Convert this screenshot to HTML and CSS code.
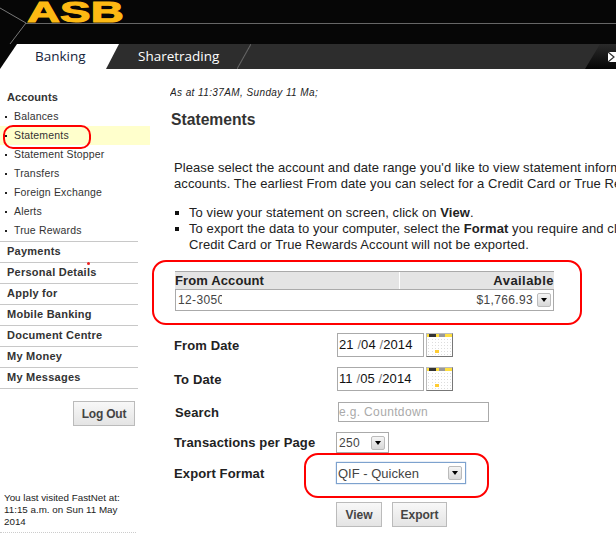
FILE: index.html
```html
<!DOCTYPE html>
<html lang="en">
<head>
<meta charset="utf-8">
<title>ASB FastNet Statements</title>
<link rel="stylesheet" href="styles.css">
</head>
<body>
<div class="page">
  <header class="masthead">
    <svg class="lines" width="616" height="44" viewBox="0 0 616 44" aria-hidden="true">
      <path d="M0 8 26 23 10 44" fill="none" stroke="#777" stroke-width="1"/>
      <path d="M26 23.500H616" fill="none" stroke="#666" stroke-width="1"/>
    </svg>
    <div class="logo"><span class="logo-text">ASB</span></div>
  </header>
  <nav class="tabs">
    <div class="tab tab-active">Banking</div>
    <div class="tab tab-other">Sharetrading</div>
    <div class="tab-spacer"></div>
    <div class="tab-mail">
      <svg width="12" height="12" viewBox="0 0 12 12" aria-hidden="true"><rect x="1" y="1" width="11" height="10" fill="#fff"/><path d="M1 1 7 6 1 11" fill="none" stroke="#333" stroke-width="1.200"/></svg>
    </div>
  </nav>
  <div class="body">
    <aside class="sidebar">
      <div class="nav-head">Accounts</div>
      <ul class="subnav">
        <li>Balances</li>
        <li class="current">Statements</li>
        <li>Statement Stopper</li>
        <li>Transfers</li>
        <li>Foreign Exchange</li>
        <li>Alerts</li>
        <li>True Rewards</li>
      </ul>
      <ul class="mainnav">
        <li>Payments</li>
        <li>Personal Details</li>
        <li>Apply for</li>
        <li>Mobile Banking</li>
        <li>Document Centre</li>
        <li>My Money</li>
        <li>My Messages</li>
      </ul>
      <div class="logout-row"><button class="btn btn-logout" type="button">Log Out</button></div>
      <p class="visited">You last visited FastNet at: 11:15 a.m. on Sun 11 May 2014</p>
    </aside>
    <main class="content">
      <p class="timestamp">As at 11:37AM, Sunday 11 Ma;</p>
      <h1 class="title">Statements</h1>
      <div class="copy">
        <p class="intro">Please select the account and date range you'd like to view statement information for your<br>accounts. The earliest From date you can select for a Credit Card or True Rewards Account</p>
        <ul class="bullets">
          <li>To view your statement on screen, click on <b>View</b>.</li>
          <li>To export the data to your computer, select the <b>Format</b> you require and click Export. Transactions on a<br>Credit Card or True Rewards Account will not be exported.</li>
        </ul>
      </div>
      <div class="acct">
        <div class="acct-head"><span class="acct-h1">From Account</span><span class="acct-h2">Available</span></div>
        <div class="acct-row">
          <span class="acct-no">12-3050</span>
          <span class="acct-bal">$1,766.93</span>
          <span class="arrow"></span>
        </div>
      </div>
      <div class="form">
        <div class="frow frow-from">
          <label class="flabel">From Date</label>
          <div class="date">21 <i>/</i>04 <i>/</i>2014</div>
          <div class="cal"><span class="cal-top"></span><span class="cal-dot"></span></div>
        </div>
        <div class="frow frow-to">
          <label class="flabel">To Date</label>
          <div class="date">11 <i>/</i>05 <i>/</i>2014</div>
          <div class="cal"><span class="cal-top"></span><span class="cal-dot"></span></div>
        </div>
        <div class="frow frow-search">
          <label class="flabel">Search</label>
          <div class="search">e.g. Countdown</div>
        </div>
        <div class="frow frow-tx">
          <label class="flabel">Transactions per Page</label>
          <div class="select select-tx"><span>250</span><span class="arrow"></span></div>
        </div>
        <div class="frow frow-exp">
          <label class="flabel">Export Format</label>
          <div class="select select-exp"><span>QIF - Quicken</span><span class="arrow"></span></div>
        </div>
        <div class="actions">
          <button class="btn btn-view" type="button">View</button>
          <button class="btn btn-export" type="button">Export</button>
        </div>
      </div>
    </main>
  </div>
  <div class="ring ring-nav"></div>
  <div class="ring ring-acct"></div>
  <div class="ring ring-exp"></div>
  <div class="red-dot"></div>
</div>
</body>
</html>
```

FILE: styles.css
```css
* { box-sizing: border-box; }
html, body { margin: 0; padding: 0; background: #fff; }
.page {
  position: relative;
  width: 616px;
  height: 540px;
  overflow: hidden;
  font-family: "Liberation Sans", Arial, sans-serif;
  color: #111;
}
ul { list-style: none; margin: 0; padding: 0; }
p { margin: 0; }

.masthead {
  position: relative;
  height: 44px;
  background: #060606;
  overflow: hidden;
}
.lines { position: absolute; left: 0; top: 0; }
.logo { padding-left: 27px; height: 24px; position: relative; }
.logo-text {
  display: inline-block;
  color: #fdb913;
  font: bold 29px/25px "Liberation Sans", Arial, sans-serif;
  -webkit-text-stroke: 1px #fdb913;
  transform: scaleX(1.58);
  transform-origin: 0 0;
}

.tabs {
  display: flex;
  height: 25px;
  background: linear-gradient(to right, #060606 18px, #2d2d2d 18px);
}
.tab { height: 25px; line-height: 25px; font-family: "Open Sans", sans-serif; font-size: 13.500px; }
.tab-active {
  width: 119px;
  padding-left: 35px;
  background: #fff;
  color: #16243c;
  clip-path: polygon(0 100%, 17px 0, 100% 0, 106px 100%);
}
.tab-other {
  width: 132px;
  padding-left: 19px;
  color: #fff;
  background:
    linear-gradient(to bottom right, transparent calc(50% - 1px), #666 50%, transparent calc(50% + 1px)) right / 14px 25px no-repeat;
}
.tab-spacer { flex: 1; }
.tab-mail {
  width: 31px;
  padding: 7px 0 0 22px;
  margin-left: -1px;
  background: linear-gradient(#2a2a2a, #050505);
  clip-path: polygon(0 100%, 15px 0, 100% 0, 100% 100%);
  overflow: hidden;
}
.tab-mail svg { display: block; }

.body { display: flex; }
.sidebar { width: 170px; flex: none; padding-top: 20px; }
.nav-head {
  height: 16px;
  padding-left: 7px;
  font-size: 11px;
  line-height: 16px;
  font-weight: bold;
  color: #333;
  letter-spacing: .1px;
}
.subnav { padding-top: 2px; }
.subnav li {
  position: relative;
  width: 150px;
  height: 19px;
  padding-left: 14px;
  font-size: 10.500px;
  line-height: 19px;
  color: #333;
  letter-spacing: .17px;
}
.subnav li::before {
  content: "";
  position: absolute;
  left: 5px;
  top: 9px;
  width: 2px;
  height: 2px;
  background: #222;
}
.subnav .current { background: #ffffcc; }
.mainnav { width: 138px; border-top: 1px solid #c8c8c8; margin-top: 1px; }
.mainnav li {
  height: 21px;
  padding-left: 7px;
  border-bottom: 1px solid #c8c8c8;
  font-size: 11px;
  line-height: 18px;
  font-weight: bold;
  color: #333;
  letter-spacing: .25px;
}
.logout-row { padding: 12px 0 0 73px; }
.btn {
  display: block;
  margin: 0;
  padding: 0;
  border: 1px solid #bbb;
  background: linear-gradient(#f8f8f8, #e4e4e4);
  color: #444;
  font: bold 12px "Liberation Sans", Arial, sans-serif;
  text-align: center;
}
.btn-logout { width: 62px; height: 25px; letter-spacing: -.2px; }
.visited {
  width: 136px;
  margin: 66px 0 0;
  padding: 0 6px 4px 4px;
  border-bottom: 1px dotted #ccc;
  font-size: 9.800px;
  line-height: 12px;
  color: #222;
}

.content { width: 446px; flex: none; overflow: hidden; }
.timestamp {
  margin-top: 18px;
  font-size: 10px;
  line-height: 12px;
  font-style: italic;
  white-space: nowrap;
  color: #222;
  letter-spacing: .4px;
}
.title {
  margin: 11px 0 0 1px;
  font-size: 15.700px;
  line-height: 20px;
  font-weight: bold;
  color: #333;
}
.copy { margin: 0 0 0 4px; width: 620px; font-size: 13px; line-height: 16px; color: #222; letter-spacing: .08px; }
.intro { margin-top: 30px; white-space: nowrap; }
.bullets { margin-top: 13px; }
.bullets li { position: relative; padding-left: 15px; white-space: nowrap; }
.bullets li::before {
  content: "";
  position: absolute;
  left: 1px;
  top: 6px;
  width: 4px;
  height: 4px;
  background: #111;
}

.acct { width: 379px; margin: 18px 0 0 5px; }
.acct-head {
  display: flex;
  justify-content: space-between;
  height: 18px;
  background: linear-gradient(to right, transparent 224px, #fff 224px, #fff 225px, transparent 225px) #e4e4e4;
  border-top: 1px solid #aaa;
  font-size: 13px;
  line-height: 17px;
  font-weight: bold;
  color: #222;
  letter-spacing: .12px;
}
.acct-h2 { letter-spacing: .45px; }
.acct-row {
  display: flex;
  align-items: center;
  height: 22px;
  border: 1px solid #aaa;
  padding: 0 2px 0 2px;
  font-size: 12px;
  color: #444;
  letter-spacing: .35px;
}
.acct-no { width: 44px; overflow: hidden; white-space: nowrap; }
.acct-bal { margin-left: auto; margin-right: 4px; }

.arrow {
  position: relative;
  flex: none;
  display: block;
  width: 14px;
  height: 14px;
  border: 1px solid #bbb;
  border-radius: 2px;
  background: linear-gradient(#f5f5f5, #d8d8d8);
}
.arrow::after {
  content: "";
  position: absolute;
  left: 3px;
  top: 4px;
  border: 3px solid transparent;
  border-top: 4px solid #000;
  border-bottom: 0;
}

.form { margin: 22px 0 0 4px; }
.frow { display: flex; align-items: center; }
.flabel {
  flex: none;
  width: 163px;
  font-size: 13px;
  font-weight: bold;
  color: #222;
  letter-spacing: .12px;
}
.frow-from { height: 24px; }
.frow-to { height: 24px; margin-top: 10px; }
.date {
  width: 87px;
  height: 24px;
  border: 1px solid #aaa;
  padding-left: 1px;
  font-size: 13px;
  line-height: 22px;
  color: #111;
  letter-spacing: .1px;
  white-space: nowrap;
}
.date i { font-style: normal; color: #777; }
.cal {
  position: relative;
  width: 27px;
  height: 24px;
  margin-left: 2px;
  border: 1px solid #bbb;
  border-right-color: #777;
  border-bottom-color: #777;
  background:
    repeating-linear-gradient(to right, #fff 0 2px, transparent 2px 3px) 3px 0,
    repeating-linear-gradient(to bottom, #fff 0 2px, #ddd 2px 3px);
}
.cal-top { position: absolute; left: 0; right: 0; top: 0; height: 3px; background: linear-gradient(to right, #ffdf40 0 2px, #333 2px 9px, #ffdf40 9px 12px, #999 12px 18px, #ffdf40 18px); }
.cal-dot { position: absolute; left: 8px; top: 16px; width: 4px; height: 3px; background: #fc3; }
.frow-search { margin-top: 11px; height: 20px; }
.frow-search .flabel { padding-left: 1px; }
.search {
  width: 151px;
  height: 20px;
  margin-left: 1px;
  border: 1px solid #aaa;
  padding-left: 0;
  font-size: 12px;
  line-height: 18px;
  color: #aaa;
  letter-spacing: .35px;
}
.frow-tx { margin-top: 10px; height: 21px; }
.select {
  display: flex;
  align-items: center;
  justify-content: space-between;
  margin-left: -1px;
  font-size: 12px;
  color: #444;
  letter-spacing: .3px;
}
.select-tx { width: 53px; height: 21px; border: 1px solid #aaa; padding: 0 3px 0 2px; }
.frow-exp { margin-top: 9px; height: 22px; }
.select-exp {
  width: 130px;
  height: 22px;
  border: 1px solid #7da2ce;
  box-shadow: 0 0 1px #7da2ce;
  padding: 0 3px 0 1px;
  font-size: 13px;
  letter-spacing: 0;
}
.actions { display: flex; gap: 10px; margin: 18px 0 0 162px; }
.btn-view { width: 46px; height: 25px; }
.btn-export { width: 55px; height: 25px; }

.ring { position: absolute; border: 2px solid #f00; }
.ring-nav { left: 3px; top: 125px; width: 88px; height: 24px; border-radius: 10px; }
.ring-acct { left: 152px; top: 260px; width: 430px; height: 65px; border-radius: 14px; }
.ring-exp { left: 304px; top: 453px; width: 185px; height: 45px; border-radius: 14px; }
.red-dot { position: absolute; left: 87px; top: 262px; width: 3px; height: 3px; border-radius: 50%; background: #e22; }
```
